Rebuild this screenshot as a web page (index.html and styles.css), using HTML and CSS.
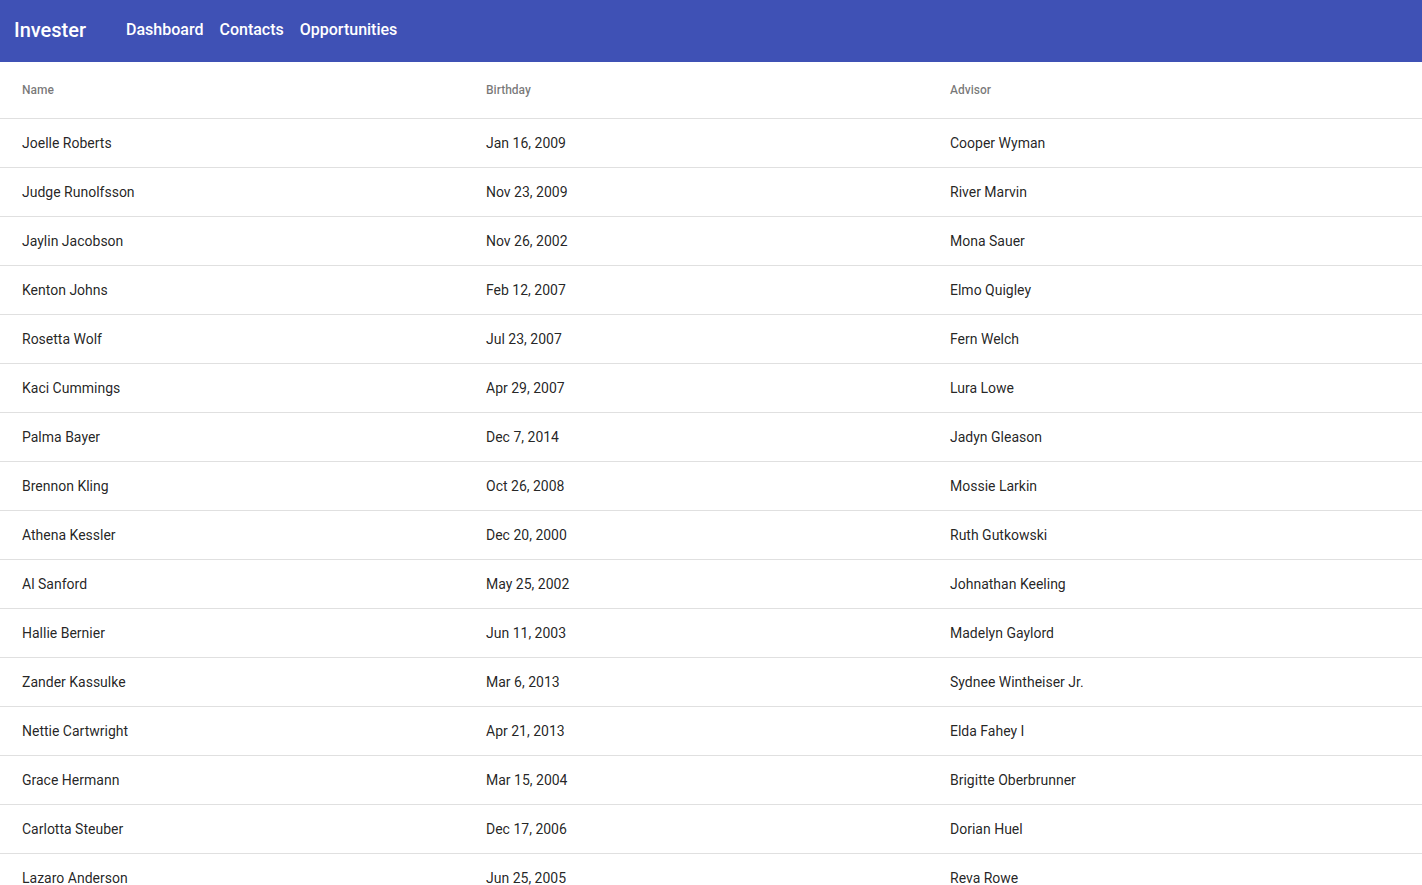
FILE: index.html
```html
<!DOCTYPE html>
<html lang="en">
<head>
  <meta charset="UTF-8" />
  <title>Invester - Contacts</title>
  <link rel="stylesheet" href="styles.css">
</head>
<body>
  <!-- Top app bar -->
  <header class="app-bar">
    <div class="brand">Invester</div>
    <nav class="nav">
      <a href="#">Dashboard</a>
      <a href="#">Contacts</a>
      <a href="#">Opportunities</a>
    </nav>
  </header>

  <!-- Contacts table -->
  <table class="contacts">
    <colgroup>
      <col class="col-name">
      <col class="col-birthday">
      <col class="col-advisor">
    </colgroup>
    <thead>
      <tr>
        <th>Name</th>
        <th>Birthday</th>
        <th>Advisor</th>
      </tr>
    </thead>
    <tbody>
      <tr><td>Joelle Roberts</td><td>Jan 16, 2009</td><td>Cooper Wyman</td></tr>
      <tr><td>Judge Runolfsson</td><td>Nov 23, 2009</td><td>River Marvin</td></tr>
      <tr><td>Jaylin Jacobson</td><td>Nov 26, 2002</td><td>Mona Sauer</td></tr>
      <tr><td>Kenton Johns</td><td>Feb 12, 2007</td><td>Elmo Quigley</td></tr>
      <tr><td>Rosetta Wolf</td><td>Jul 23, 2007</td><td>Fern Welch</td></tr>
      <tr><td>Kaci Cummings</td><td>Apr 29, 2007</td><td>Lura Lowe</td></tr>
      <tr><td>Palma Bayer</td><td>Dec 7, 2014</td><td>Jadyn Gleason</td></tr>
      <tr><td>Brennon Kling</td><td>Oct 26, 2008</td><td>Mossie Larkin</td></tr>
      <tr><td>Athena Kessler</td><td>Dec 20, 2000</td><td>Ruth Gutkowski</td></tr>
      <tr><td>Al Sanford</td><td>May 25, 2002</td><td>Johnathan Keeling</td></tr>
      <tr><td>Hallie Bernier</td><td>Jun 11, 2003</td><td>Madelyn Gaylord</td></tr>
      <tr><td>Zander Kassulke</td><td>Mar 6, 2013</td><td>Sydnee Wintheiser Jr.</td></tr>
      <tr><td>Nettie Cartwright</td><td>Apr 21, 2013</td><td>Elda Fahey I</td></tr>
      <tr><td>Grace Hermann</td><td>Mar 15, 2004</td><td>Brigitte Oberbrunner</td></tr>
      <tr><td>Carlotta Steuber</td><td>Dec 17, 2006</td><td>Dorian Huel</td></tr>
      <tr><td>Lazaro Anderson</td><td>Jun 25, 2005</td><td>Reva Rowe</td></tr>
    </tbody>
  </table>
</body>
</html>
```

FILE: styles.css
```css
/* Base */
* {
  box-sizing: border-box;
}
body {
  margin: 0;
  font-family: Roboto, "Liberation Sans", Arial, sans-serif;
  background: #ffffff;
  color: rgba(0, 0, 0, 0.87);
}

/* App bar */
.app-bar {
  height: 62px;
  background-color: #3f51b5;
  color: #ffffff;
  display: flex;
  align-items: center;
  padding: 0 14px 4px;
}
.brand {
  font-size: 20px;
  font-weight: 500;
  margin-right: 40px;
  padding-top: 1px;
}
.nav {
  display: flex;
  gap: 16px;
}
.nav a {
  color: #ffffff;
  text-decoration: none;
  font-size: 16px;
  font-weight: 500;
}

/* Table */
.contacts {
  width: 100%;
  border-collapse: collapse;
  table-layout: fixed;
}
.col-name,
.col-birthday {
  width: 464px;
}
.contacts th,
.contacts td {
  text-align: left;
  padding: 0 22px;
  border-bottom: 1px solid #e0e0e0;
}
.contacts th {
  height: 56px;
  font-size: 12px;
  font-weight: 500;
  color: rgba(0, 0, 0, 0.54);
  padding-top: 1px;
}
.contacts td {
  height: 49px;
  font-size: 14px;
  padding-top: 2px;
  padding-bottom: 1px;
}
```
